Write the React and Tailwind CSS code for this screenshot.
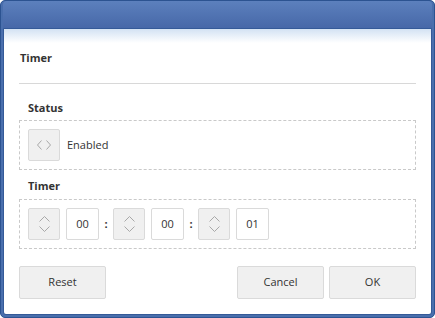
import React from 'react';

const font = { fontFamily: '"Open Sans", "Noto Sans", sans-serif' };

const Spinner = () => (
  <button className="w-[32px] h-[32px] flex flex-col items-center justify-center gap-[4px] bg-[#f0f0f0] border border-[#dadada] rounded-[2px]">
    <svg width="11" height="6" viewBox="0 0 11 6" fill="none" stroke="#a8a8a8" strokeWidth="1">
      <path d="M0.5 5.5 L5.5 0.5 L10.5 5.5" />
    </svg>
    <svg width="11" height="6" viewBox="0 0 11 6" fill="none" stroke="#a8a8a8" strokeWidth="1">
      <path d="M0.5 0.5 L5.5 5.5 L10.5 0.5" />
    </svg>
  </button>
);

const Field = ({ value }) => (
  <div className="w-[33px] h-[32px] flex items-center justify-center bg-white border border-[#dadada] rounded-[2px] text-[11px] text-[#333]">
    {value}
  </div>
);

const Colon = () => <span className="w-[14px] text-center text-[11px] font-bold text-[#333]">:</span>;

export default function App() {
  return (
    <div
      className="w-[435px] h-[318px] flex flex-col rounded-[5px] border border-[#2c5391] bg-[#4a6fad] px-[2px] pb-[2px]"
      style={font}
    >
      {/* Title bar */}
      <div className="h-[27px] shrink-0 rounded-t-[4px] bg-gradient-to-b from-[#5c80bd] to-[#4768a8]" />

      {/* Content */}
      <div className="flex-1 flex flex-col border border-[#355a98] rounded-b-[3px] bg-gradient-to-b from-[#d3e2f3] to-white to-[14px]">
        <div className="px-[15px]">
          <div className="pt-[19px] pb-[17px] border-b border-[#d8d8d8] pl-[1px] leading-[16px]">
            <span className="text-[11px] font-bold text-[#333]">Timer</span>
          </div>
        </div>

        <div className="px-[15px] pt-[16px]">
          <div className="pl-[9px] text-[11px] font-bold text-[#333] leading-[16px]">Status</div>
          <div className="mt-[4px] h-[50px] border border-dashed border-[#c9c9c9] flex items-center px-[8px] gap-[7px]">
            <button className="w-[32px] h-[32px] flex items-center justify-center bg-[#f0f0f0] border border-[#dadada] rounded-[2px]">
              <svg width="16" height="10" viewBox="0 0 16 10" fill="none" stroke="#a8a8a8" strokeWidth="1">
                <path d="M5.5 0.5 L1.5 5 L5.5 9.5" />
                <path d="M10.5 0.5 L14.5 5 L10.5 9.5" />
              </svg>
            </button>
            <span className="text-[11px] text-[#333]">Enabled</span>
          </div>

          <div className="mt-[8px] pl-[9px] text-[11px] font-bold text-[#333] leading-[16px]">Timer</div>
          <div className="mt-[5px] h-[50px] border border-dashed border-[#c9c9c9] flex items-center px-[8px]">
            <div className="flex items-center gap-[6px]">
              <Spinner />
              <Field value="00" />
            </div>
            <Colon />
            <div className="flex items-center gap-[6px]">
              <Spinner />
              <Field value="00" />
            </div>
            <Colon />
            <div className="flex items-center gap-[6px]">
              <Spinner />
              <Field value="01" />
            </div>
          </div>
        </div>

        <div className="px-[15px] mt-[17px] flex items-center">
          <button className="w-[87px] h-[33px] bg-[#f0f0f0] border border-[#dadada] rounded-[2px] text-[11px] text-[#333]">Reset</button>
          <div className="flex-1" />
          <button className="w-[87px] h-[33px] bg-[#f0f0f0] border border-[#dadada] rounded-[2px] text-[11px] text-[#333]">Cancel</button>
          <button className="ml-[5px] w-[87px] h-[33px] bg-[#f0f0f0] border border-[#dadada] rounded-[2px] text-[11px] text-[#333]">OK</button>
        </div>
      </div>
    </div>
  );
}
